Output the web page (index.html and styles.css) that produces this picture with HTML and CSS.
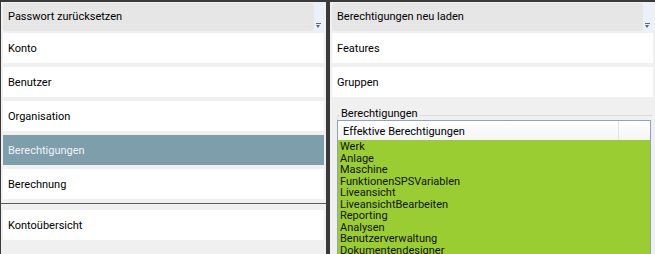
FILE: index.html
```html
<!DOCTYPE html>
<html lang="de">
<head>
    <meta charset="UTF-8">
    <title>Benutzer Berechtigungen</title>
    <link rel="stylesheet" href="styles.css">
</head>
<body>
    <div class="app">
        <div class="panel">
            <div class="toolbar">
                <div class="tool-button">Passwort zurücksetzen</div>
                <div class="overflow"><span class="overflow-glyph"></span></div>
            </div>
            <div class="nav-list">
                <div class="nav-item">Konto</div>
                <div class="nav-item">Benutzer</div>
                <div class="nav-item">Organisation</div>
                <div class="nav-item selected">Berechtigungen</div>
                <div class="nav-item">Berechnung</div>
                <div class="divider"></div>
                <div class="nav-item">Kontoübersicht</div>
            </div>
        </div>

        <div class="panel">
            <div class="toolbar">
                <div class="tool-button">Berechtigungen neu laden</div>
                <div class="overflow"><span class="overflow-glyph"></span></div>
            </div>
            <div class="nav-list">
                <div class="nav-item">Features</div>
                <div class="nav-item">Gruppen</div>
            </div>
            <div class="group-box">
                <span class="group-title">Berechtigungen</span>
                <div class="list-view">
                    <div class="list-header">
                        <div class="col-head">Effektive Berechtigungen</div>
                        <div class="col-rest"></div>
                    </div>
                    <ul class="list-items">
                        <li>Werk</li>
                        <li>Anlage</li>
                        <li>Maschine</li>
                        <li>FunktionenSPSVariablen</li>
                        <li>Liveansicht</li>
                        <li>LiveansichtBearbeiten</li>
                        <li>Reporting</li>
                        <li>Analysen</li>
                        <li>Benutzerverwaltung</li>
                        <li>Dokumentendesigner</li>
                    </ul>
                </div>
            </div>
        </div>
    </div>
</body>
</html>
```

FILE: styles.css
```css
body {
    margin: 0;
    background-color: #3a3a3a;
    font-family: Roboto, "Liberation Sans", Arial, sans-serif;
    font-size: 11px;
    color: #000;
    overflow: hidden;
}

.app {
    display: flex;
    gap: 4px;
    height: 254px;
    padding: 2px 0 0 1px;
    box-sizing: border-box;
}

.panel {
    width: 325px;
    background-color: #f0f0f0;
    padding: 1px 3px 0 2px;
    box-sizing: border-box;
    overflow: hidden;
}

.toolbar {
    display: flex;
    height: 28px;
}

.tool-button {
    flex: 1;
    background-color: #e6e6e6;
    border-radius: 3px;
    padding: 7px 5px 0;
    box-sizing: border-box;
}

.overflow {
    width: 9px;
    background-color: #eaf1fa;
    position: relative;
}

/* kleiner Pfeil unten rechts */
.overflow-glyph {
    position: absolute;
    left: 2px;
    top: 20px;
    width: 5px;
    height: 1px;
    background-color: #666;
}

.overflow-glyph::after {
    content: "";
    position: absolute;
    left: 0;
    top: 2px;
    border-left: 2.5px solid transparent;
    border-right: 2.5px solid transparent;
    border-top: 3px solid #666;
}

.nav-list {
    display: flex;
    flex-direction: column;
    gap: 4px;
    margin-top: 2px;
}

.nav-item {
    height: 30px;
    background-color: #fff;
    padding: 9px 5px 0;
    box-sizing: border-box;
    margin-right: -1px;
}

.nav-item.selected {
    background-color: #7f9eab;
    color: #eef3f5;
}

.divider {
    height: 1px;
    background-color: #5a5a5a;
    margin: 0 -3px 2px -2px;
}

.group-box {
    position: relative;
    margin: 18px 0 0 5px;
    border-top: 1px solid #dcdcdc;
    border-left: 1px solid #dcdcdc;
    padding-top: 4px;
}

.group-title {
    position: absolute;
    top: -9px;
    left: 2px;
    padding: 0 2px 0 1px;
    background-color: #f0f0f0;
}

.list-view {
    border: 1px solid #8ea2bd;
    border-bottom: none;
    margin: 0 1px 0 -1px;
}

.list-header {
    display: flex;
    height: 19px;
    background: linear-gradient(#ffffff, #f2f4f7);
}

.col-head {
    width: 281px;
    padding: 4px 0 0 5px;
    box-sizing: border-box;
    border-right: 1px solid #e2e4e8;
}

.col-rest {
    flex: 1;
}

.list-items {
    list-style: none;
    margin: 0;
    padding: 1px 0 0 2px;
    background-color: #9acd32;
    font-size: 11px;
    line-height: 11.55px;
    color: #111;
    height: 120px;
}
```
